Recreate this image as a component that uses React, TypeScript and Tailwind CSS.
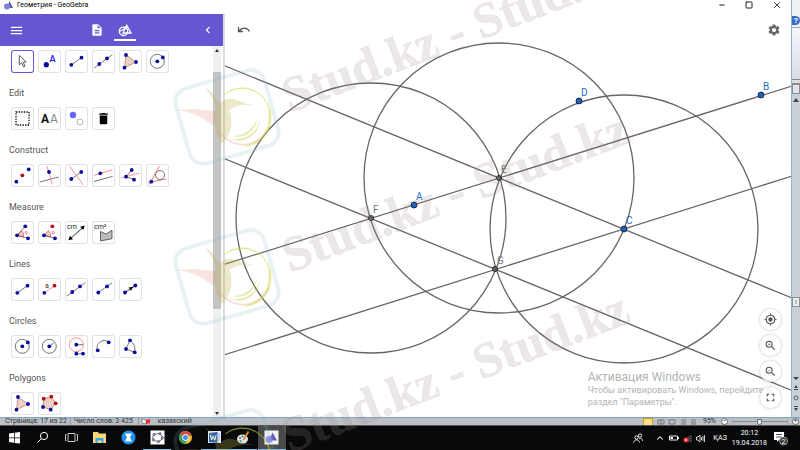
import React from 'react';
import { ChevronUp, Minus, Square, X } from 'lucide-react';
import { MdGpsFixed, MdMenu, MdDescription, MdChevronLeft, MdSettings, MdZoomIn, MdZoomOut, MdFullscreen, MdDelete } from 'react-icons/md';

const NAVY = '#0a0a9c';
const RED = '#b01020';
const PINK = '#f47878';
const GRAY = '#555';

type DotProps = { x: number; y: number; c?: string };
const Dot = ({ x, y, c = NAVY }: DotProps) => <circle cx={x} cy={y} r={1.9} fill={c} />;

type SegProps = { d: string; c?: string };
const Seg = ({ d, c = GRAY }: SegProps) => <path d={d} stroke={c} strokeWidth={0.8} fill="none" />;

interface Tool {
    name: string;
    icon: React.ReactNode;
    active?: boolean;
}

interface ToolGroup {
    title?: string;
    tools: Tool[];
}

const segment = <><Seg d="M6.3 14.8 16.5 7.7" /><Dot x={6.3} y={14.8} /><Dot x={16.5} y={7.7} /></>;
const line = <><Seg d="M2 18 20.3 4.7" /><Dot x={7.3} y={14} /><Dot x={15} y={8.4} /></>;
const triangle = (
    <>
        <path d="M7 5 17 12 5.5 17.7Z" fill="#ecd2c6" stroke="#c08068" strokeWidth={0.8} />
        <Dot x={7} y={5} /><Dot x={17} y={12} /><Dot x={5.5} y={17.7} />
    </>
);
const circlePoint = (
    <>
        <circle cx={11.3} cy={11.3} r={7} fill="none" stroke={GRAY} strokeWidth={0.8} />
        <Dot x={11.3} y={11.3} /><Dot x={16.8} y={7.4} />
    </>
);
const angleWedge = <path d="M6 14.3 10.5 9.5A6.5 6.5 0 0 1 12.5 16Z" fill="#f9c4c4" stroke="#e85050" strokeWidth={0.7} />;

const groups: ToolGroup[] = [
    {
        tools: [
            { name: 'Move', active: true, icon: <path d="M8.3 5.5v9.3l2.3-1.9 1.9 4 1.5-.7-1.8-3.9 3-.3Z" fill="#fff" stroke="#333" strokeWidth={0.8} /> },
            { name: 'Point', icon: <><circle cx={8.3} cy={14.7} r={2.6} fill={NAVY} /><text x={11.5} y={11.5} fontSize={9} fontWeight={600} fill="#2222ee">A</text></> },
            { name: 'Segment', icon: segment },
            { name: 'Line', icon: line },
            { name: 'Polygon', icon: triangle },
            { name: 'Circle with Center through Point', icon: circlePoint },
        ],
    },
    {
        title: 'Edit',
        tools: [
            { name: 'Select Objects', icon: <rect x={5} y={5} width={13} height={13} fill="none" stroke="#000" strokeWidth={1.3} strokeDasharray="1.3 1.3" /> },
            { name: 'Show / Hide Label', icon: <><text x={3} y={15.5} fontSize={12} fontWeight={700} fill="#111">A</text><text x={12} y={15.5} fontSize={12} fill="#888">A</text></> },
            { name: 'Show / Hide Object', icon: <><circle cx={8} cy={8} r={3.2} fill="#6666ff" /><circle cx={15} cy={15} r={3} fill="none" stroke="#999" strokeWidth={0.7} /></> },
            { name: 'Delete', icon: <MdDelete x={4} y={4} size={15} color="#000" /> },
        ],
    },
    {
        title: 'Construct',
        tools: [
            { name: 'Midpoint or Center', icon: <><Dot x={5.3} y={17.7} /><Dot x={11.3} y={11.3} c={RED} /><Dot x={17.7} y={5.3} /></> },
            { name: 'Perpendicular Line', icon: <><Seg d="M1.7 18 20.7 13" /><Seg d="M9 2.3 14.3 20.5" c={PINK} /><Dot x={11} y={8} /></> },
            { name: 'Perpendicular Bisector', icon: <><Seg d="M6.3 15 16.3 8" /><Seg d="M4.7 2.3 18 20.7" c={PINK} /><Dot x={6.3} y={15} /><Dot x={16.3} y={8} /></> },
            { name: 'Parallel Line', icon: <><Seg d="M2 11.3 20.7 5.7" c={PINK} /><Seg d="M2 17.5 20.7 12.3" /><Dot x={8.3} y={9.3} /></> },
            { name: 'Angle Bisector', icon: <><Seg d="M1.7 14 20.3 9" c={PINK} /><Seg d="M12.7 6 7 12.7 15 15.7" /><Dot x={12.7} y={6} /><Dot x={7} y={12.7} /><Dot x={15} y={15.7} /></> },
            { name: 'Tangents', icon: <><circle cx={14} cy={11} r={4.5} fill="none" stroke={GRAY} strokeWidth={0.8} /><Seg d="M3.3 20.5 13.3 2.3M2.3 18.3 20.3 15" c="#e85050" /><Dot x={5.3} y={17.7} /></> },
        ],
    },
    {
        title: 'Measure',
        tools: [
            { name: 'Angle', icon: <>{angleWedge}<Seg d="M14.3 5.3 6 14.3 17 17.3" /><circle cx={15.3} cy={11.7} r={1.2} fill="none" stroke="#e85050" strokeWidth={0.7} /><Dot x={14.3} y={5.3} /><Dot x={6} y={14.3} /><Dot x={17} y={17.3} /></> },
            { name: 'Angle with Given Size', icon: <>{angleWedge}<Seg d="M6 14.3 17 17.3" /><circle cx={15.3} cy={11.7} r={1.2} fill="none" stroke="#e85050" strokeWidth={0.7} /><Dot x={14.3} y={5.3} c={RED} /><Dot x={6} y={14.3} /><Dot x={17} y={17.3} /></> },
            { name: 'Distance or Length', icon: <><text x={2} y={8} fontSize={7} fill="#222">cm</text><Seg d="M5 18 18.5 6" c="#000" /><path d="M3.3 19.3 5 14.8 8 18.2ZM19.8 4.6 18.2 9 15.2 5.8Z" fill="#000" /></> },
            { name: 'Area', icon: <><text x={2} y={8} fontSize={7} fill="#222">cm²</text><path d="M8.5 10.5 14 13 20 9.3V17.7L8.5 20Z" fill="#bbb" stroke="#444" strokeWidth={0.8} /></> },
        ],
    },
    {
        title: 'Lines',
        tools: [
            { name: 'Segment', icon: segment },
            { name: 'Segment with Given Length', icon: <><text x={7} y={9.5} fontSize={7} fill="#333">a</text><Seg d="M6.3 14.8 16.5 7.7" c={PINK} /><Dot x={6.3} y={14.8} /><Dot x={16.5} y={7.7} c={RED} /></> },
            { name: 'Line', icon: line },
            { name: 'Ray', icon: <><Seg d="M6.3 14.5 20.3 4.7" /><Dot x={6.3} y={14.5} /><Dot x={15} y={8.4} /></> },
            { name: 'Vector', icon: <><Seg d="M6 14.5 16.3 7.5" c="#000" /><path d="M14.3 8.8 12 12.8 9.6 9.6Z" fill="#000" /><Dot x={6} y={14.5} /><Dot x={16.3} y={7.5} /></> },
        ],
    },
    {
        title: 'Circles',
        tools: [
            { name: 'Circle with Center through Point', icon: circlePoint },
            { name: 'Circle: Center & Radius', icon: <><circle cx={11.3} cy={11.3} r={7} fill="none" stroke={GRAY} strokeWidth={0.8} /><Seg d="M11.3 11.3 16 8" /><Dot x={11.3} y={11.3} /></> },
            { name: 'Compass', icon: <><circle cx={11.3} cy={9.7} r={7} fill="none" stroke={PINK} strokeWidth={0.8} /><Seg d="M11.3 9.7H18.3M11.3 18.7H18" /><Dot x={11.3} y={9.7} /><Dot x={11.3} y={18.7} /><Dot x={18} y={18.7} /></> },
            { name: 'Semicircle', icon: <><Seg d="M5.7 15.3A7 7 0 0 1 16.7 7.3" /><Dot x={5.7} y={15.3} /><Dot x={16.7} y={7.3} /></> },
            { name: 'Circular Sector', icon: <><Seg d="M11 5.3 7 14 15.7 17.3A12 12 0 0 0 11 5.3" /><Dot x={11} y={5.3} /><Dot x={7} y={14} /><Dot x={15.7} y={17.3} /></> },
        ],
    },
    {
        title: 'Polygons',
        tools: [
            { name: 'Polygon', icon: triangle },
            { name: 'Regular Polygon', icon: <><path d="M5.7 6.7 13.3 4.7 17.7 11.3 12.7 17.7 5 15Z" fill="#ecd2c6" stroke="#c08068" strokeWidth={0.8} /><Dot x={5.7} y={6.7} c={RED} /><Dot x={13.3} y={4.7} c={RED} /><Dot x={17.7} y={11.3} c={RED} /><Dot x={12.7} y={17.7} /><Dot x={5} y={15} /></> },
        ],
    },
];

const ShapesIcon = ({ size }: { size: number }) => (
    <svg width={size} height={size} viewBox="0 0 14 14" fill="none" stroke="currentColor" strokeWidth={1.3}>
        <circle cx={5.5} cy={8.3} r={4.2} />
        <path d="M8.7 2.2 13 10H5Z" />
        <path d="M1.5 8.5 9 4.5" />
    </svg>
);

const TitleBar = () => (
    <div className="flex h-[14px] shrink-0 items-start bg-white pl-1 text-[7px] leading-[10px] text-black">
        <svg className="mr-1 mt-px h-[9px] w-[9px]" viewBox="0 0 9 9">
            <path d="M5.5 0 9 7H3Z" fill="#5a5a9c" />
            <circle cx={3} cy={5.5} r={3} fill="#8080e0" />
        </svg>
        <span>Геометрия - GeoGebra</span>
        <div className="ml-auto mr-[9px] flex gap-[19px] text-[#222]">
            <button aria-label="Minimize"><Minus className="h-[8px] w-[8px]" strokeWidth={3} /></button>
            <button aria-label="Maximize"><Square className="h-[8px] w-[8px]" strokeWidth={3} /></button>
            <button aria-label="Close"><X className="h-[10px] w-[10px]" strokeWidth={2} /></button>
        </div>
    </div>
);

const ToolPanel = () => (
    <aside className="flex w-[223px] shrink-0 flex-col">
        <header className="flex h-8 shrink-0 items-center bg-[#6557d2] pl-[9px] pr-2 text-white">
            <button aria-label="Menu"><MdMenu size={15} /></button>
            <button aria-label="Algebra" className="ml-[66px]"><MdDescription size={14} /></button>
            <button aria-label="Tools" className="ml-[10px] flex h-8 w-[22px] flex-col items-center justify-between pb-[5px] pt-[9px]">
                <ShapesIcon size={14} />
                <span className="h-[2px] w-full bg-white" />
            </button>
            <button aria-label="Collapse" className="ml-auto"><MdChevronLeft size={14} /></button>
        </header>
        <div className="flex min-h-0 flex-1">
            <div className="flex flex-1 flex-col gap-[13px] overflow-hidden pl-[11px] pt-1">
                {groups.map((group, index) => (
                    <section key={index} className="shrink-0">
                        {group.title && <h2 className="-ml-[2px] mb-[7px] text-[9px] leading-[14px] text-[#555]">{group.title}</h2>}
                        <div className="flex gap-1">
                            {group.tools.map((tool, i) => (
                                <button
                                    key={i}
                                    aria-label={tool.name}
                                    className={`h-[23px] w-[23px] rounded-[3px] bg-white ring-1 ring-inset ${tool.active ? 'ring-[#6557d2]' : 'ring-[#e2e2e2]'}`}
                                >
                                    <svg className="h-[23px] w-[23px]" viewBox="0 0 23 23">{tool.icon}</svg>
                                </button>
                            ))}
                        </div>
                    </section>
                ))}
            </div>
            <div className="flex w-[8px] flex-col items-center bg-[#f0f0f0]">
                <svg className="my-[3px] h-[4px] w-[4px]" viewBox="0 0 4 4"><path d="M2 0 4 3H0Z" fill="#333" /></svg>
                <div className="mt-4 h-[64%] w-full bg-[#c4c4c4]" />
                <svg className="mb-[2px] mt-auto h-[4px] w-[4px]" viewBox="0 0 4 4"><path d="M2 4 4 1H0Z" fill="#333" /></svg>
            </div>
            <div className="w-[2px] bg-white" />
        </div>
    </aside>
);

const circles = [
    { x: 371, y: 218, r: 135 },
    { x: 499, y: 178, r: 135 },
    { x: 624, y: 229, r: 134 },
];

const lines = [
    'M224 65.5 792 298',
    'M224 158.5 792 390.5',
    'M224 264.5 792 86',
    'M224 355 792 176',
];

const points = [
    { label: 'A', x: 414, y: 205, free: true },
    { label: 'B', x: 761, y: 95, free: true },
    { label: 'C', x: 624, y: 229, free: true },
    { label: 'D', x: 579, y: 101, free: true },
    { label: 'E', x: 499, y: 178 },
    { label: 'F', x: 371, y: 218 },
    { label: 'G', x: 495, y: 269 },
];

const zoomButtons = [
    { name: 'Standard view', Icon: MdGpsFixed },
    { name: 'Zoom in', Icon: MdZoomIn },
    { name: 'Zoom out', Icon: MdZoomOut },
    { name: 'Fullscreen', Icon: MdFullscreen },
];

const GraphicsView = () => (
    <main className="relative flex-1 overflow-hidden border-l-2 border-[#dcdcdc] bg-white">
        <svg className="absolute inset-0 h-full w-full">
            <g transform="translate(-225 -14)">
                <g fill="none" stroke="#666" strokeWidth={1.3}>
                    {circles.map((c) => <circle key={c.x} cx={c.x} cy={c.y} r={c.r} />)}
                    {lines.map((d) => <path key={d} d={d} />)}
                </g>
                {points.map((p) => (
                    <g key={p.label}>
                        <circle cx={p.x} cy={p.y} r={p.free ? 3 : 2.5} fill={p.free ? '#1565c0' : '#606060'} stroke="#111" strokeWidth={0.8} />
                        <text x={p.x + 2} y={p.y - 5} fontSize={10} fill={p.free ? '#1e6fd0' : '#777'}>{p.label}</text>
                    </g>
                ))}
            </g>
        </svg>
        <button aria-label="Undo" className="absolute left-3 top-2 text-[#555]">
            <svg className="h-4 w-4" viewBox="0 0 16 16" fill="none" stroke="currentColor" strokeWidth={1.3}>
                <path d="M1.5 5V9.500H6M2 9C5 5 10 5 12.500 9.500" />
            </svg>
        </button>
        <button aria-label="Settings" className="absolute right-[10px] top-[9px] text-[#666]"><MdSettings size={14} /></button>
        <div className="absolute bottom-[9px] right-[20px] text-[9px] leading-[12px] text-[#b4b4b4]">
            <p className="text-[12px] leading-[14px]">Активация Windows</p>
            <p>Чтобы активировать Windows, перейдите в</p>
            <p>раздел "Параметры".</p>
        </div>
        <div className="absolute bottom-[9px] right-[10px] flex flex-col gap-[5px]">
            {zoomButtons.map(({ name, Icon }) => (
                <button key={name} aria-label={name} className="flex h-[21px] w-[21px] items-center justify-center rounded-full bg-white/80 text-[#555] shadow-[0_0_3px_rgba(0,0,0,0.3)]">
                    <Icon size={13} />
                </button>
            ))}
        </div>
    </main>
);

// The strip of the Word window that shows to the right of GeoGebra
const WordEdge = () => (
    <div className="flex w-[9px] shrink-0 flex-col items-center overflow-hidden border-l border-[#8fb4d0] bg-[#c9d0d8]">
        <div className="flex h-7 w-full items-end border-b border-[#9aa9c4] bg-[#eef1f6] pb-[2px]">
            <span className="flex h-[9px] w-[8px] items-center justify-center rounded-r-full bg-[#3a6cc8] text-[8px] font-bold leading-none text-white">?</span>
        </div>
        <div className="h-[51px] w-full bg-gradient-to-b from-[#f4f6fb] to-[#d8dce4]" />
        <div className="h-[5px] w-full border-y border-[#888] bg-[#ddd]" />
        <div className="h-[10px] w-[8px] border border-[#8a8f98] bg-[#e4e4e8]" />
        <svg className="mt-1 h-[4px] w-[6px]" viewBox="0 0 6 4"><path d="M3 0 6 4H0Z" fill="#444" /></svg>
        <div className="flex-1" />
        <div className="h-[10px] w-full border border-[#8a8f98] bg-[#eee] p-[2px]"><div className="h-full bg-[#bbb]" /></div>
        <svg className="mt-[68px] h-[42px] w-[8px] shrink-0" viewBox="0 0 8 42" fill="#444">
            <path d="M1 2H7L4 5ZM4 10 6 13H2ZM2 14H6V15H2ZM2 33H6L4 36ZM2 31H6V32H2Z" />
            <circle cx={4} cy={23} r={2} fill="none" stroke="#444" strokeWidth={0.8} />
        </svg>
    </div>
);

const WordStatus = () => (
    <footer className="flex h-[9px] shrink-0 items-center overflow-hidden border-b border-t border-b-[#555] border-t-[#7ba7c4] bg-[#bcc0c6] pl-[5px] text-[7px] leading-[7px] text-[#333]">
        <span>Страница: 17 из 22</span>
        <span className="ml-[3px] border-l border-[#999] pl-[3px]">Число слов: 3 425</span>
        <span className="ml-[5px] border-l border-[#999] pl-[2px]">
            <svg className="h-[7px] w-[10px]" viewBox="0 0 10 7"><path d="M1 1 5 2V6L1 5Z" fill="#fff" stroke="#456" strokeWidth={0.6} /><path d="M5 2 9 1V5L5 6Z" fill="#d33" /></svg>
        </span>
        <span className="ml-[7px]">казахский</span>
        <div className="ml-auto mr-[1px] flex h-full items-center">
            <span className="h-[8px] w-[10px] border border-[#c89820] bg-[#ffe08a]" />
            <svg className="ml-1 h-[6px] w-[40px]" viewBox="0 0 40 6" fill="none" stroke="#666" strokeWidth={0.8}>
                <path d="M1 1H7V5H1ZM4 1V5M12 1H18V5H12ZM24 1H29M25 3H29M24 5H29M34 1H39M34 3H39M34 5H39" />
            </svg>
            <span className="ml-[6px]">95%</span>
            <span className="ml-[5px] flex h-[7px] w-[7px] items-center justify-center rounded-full border border-[#666] bg-white">−</span>
            <input type="range" aria-label="Zoom" defaultValue={48} className="mx-1 h-[6px] w-[56px] appearance-none border-x border-[#aaa] bg-[linear-gradient(#888,#888)] bg-[length:100%_1px] bg-center bg-no-repeat [&::-webkit-slider-thumb]:h-[6px] [&::-webkit-slider-thumb]:w-[5px] [&::-webkit-slider-thumb]:appearance-none [&::-webkit-slider-thumb]:rounded-b-full [&::-webkit-slider-thumb]:border [&::-webkit-slider-thumb]:border-[#666] [&::-webkit-slider-thumb]:bg-[#eee]" />
            <span className="flex h-[7px] w-[7px] items-center justify-center rounded-full border border-[#666] bg-white">+</span>
        </div>
    </footer>
);

const apps = [
    { name: 'Start', icon: <path d="M2 3.500 7 2.800V7.500H2ZM7.700 2.700 13 2V7.500H7.700ZM2 8.200H7V12.800L2 12.100ZM7.700 8.200H13V13.600L7.700 12.900Z" fill="#fff" /> },
    { name: 'Search', icon: <><circle cx={9} cy={6} r={3.6} fill="none" stroke="#fff" /><path d="M6.300 8.700 2.500 12.500" stroke="#fff" /></> },
    { name: 'Task View', icon: <path d="M4 3.500H11V11.500H4ZM2.500 4.500H1.500V10.500H2.500M12.500 4.500H13.500V10.500H12.500" fill="none" stroke="#ddd" strokeWidth={0.9} /> },
    { name: 'Explorer', icon: <><path d="M1 2H6L7 3.500H14V13H1Z" fill="#f8d878" /><path d="M3.500 13V8H11.500V13H9.500V10.500H5.500V13Z" fill="#3aa8e0" /></> },
    { name: 'Browser', icon: <><circle cx={7.5} cy={7.5} r={7} fill="#2090f0" /><path d="M4 3.500H11L9 7.500 11 11.500H4L6 7.500Z" fill="#fff" /></> },
    { name: 'GeoGebra', open: true, icon: <><rect x={0.5} y={0.5} width={14} height={14} fill="#fff" /><ellipse cx={7.5} cy={7.5} rx={4.8} ry={3.8} fill="none" stroke="#666" strokeWidth={1} /><g fill="#9c9cf0" stroke="#333" strokeWidth={0.5}><circle cx={4} cy={4.5} r={1.2} /><circle cx={10} cy={3.6} r={1.2} /><circle cx={12.3} cy={8} r={1.2} /><circle cx={8.5} cy={11.6} r={1.2} /><circle cx={3.3} cy={9.8} r={1.2} /></g></> },
    { name: 'Chrome', icon: <><circle cx={7.5} cy={7.5} r={6.5} fill="#e8c030" /><path d="M7.500 7.500 1.900 4.200A6.500 6.500 0 0 1 13.600 5.200Z" fill="#dc4a3c" /><path d="M7.500 7.500 1.900 4.200A6.500 6.500 0 0 0 7 14L9 10Z" fill="#38a058" /><circle cx={7.5} cy={7.5} r={3} fill="#4a8af0" stroke="#fff" /></> },
    { name: 'Word', open: true, icon: <><rect x={1} y={1} width={13} height={12} fill="#e8eef8" /><path d="M11 4H13M11 6H13M11 8H13M11 10H13" stroke="#7a9ad0" strokeWidth={0.7} /><path d="M2 3 10.500 2V13L2 12Z" fill="#2b5fb0" /><path d="M3.300 5 4.600 10 6.200 6 7.800 10 9.200 5" fill="none" stroke="#fff" /></> },
    { name: 'Paint', open: true, icon: <><ellipse cx={6.5} cy={9} rx={5.5} ry={4.5} fill="#d8e8f4" /><circle cx={4} cy={8} r={1.1} fill="#d44" /><circle cx={6.5} cy={6.5} r={1.1} fill="#3a3" /><circle cx={4.5} cy={11} r={1.1} fill="#38c" /><path d="M7.500 10 12.500 1.500" stroke="#e09030" strokeWidth={1.8} /></> },
    { name: 'Geometry', open: true, active: true, icon: <><rect x={0.5} y={0.5} width={14} height={14} fill="#f4f4f4" /><path d="M8.500 2.500 13 10.500H5Z" fill="#6060b8" /><circle cx={5} cy={9.5} r={3.5} fill="#8484e0" fillOpacity={0.85} /></> },
];

const Taskbar = () => (
    <nav className="flex h-6 shrink-0 items-center bg-[#08090b] text-[7px] text-white">
        <div className="flex w-[286px] justify-between">
            {apps.map((app) => (
                <button
                    key={app.name}
                    aria-label={app.name}
                    className={`flex h-6 w-7 items-center justify-center border-b ${app.open ? 'border-[#7ab8e8]' : 'border-transparent'} ${app.active ? 'bg-[#484a4c]' : ''}`}
                >
                    <svg className="h-[15px] w-[15px]" viewBox="0 0 15 15">{app.icon}</svg>
                </button>
            ))}
        </div>
        <div className="ml-auto flex items-center pr-3">
            <svg className="mr-3 h-[10px] w-[10px]" viewBox="0 0 10 10" fill="none" stroke="#fff" strokeWidth={0.9}>
                <circle cx={3.5} cy={4.5} r={1.7} /><circle cx={7} cy={2.5} r={1.7} />
                <path d="M.5 9.500C1 6 6 6 6.500 9.500M6 6C8 4.500 9.500 6 9.500 8" />
            </svg>
            <ChevronUp className="mr-1 h-[10px] w-[10px]" strokeWidth={2.5} />
            <svg className="mr-1 h-[8px] w-[10px]" viewBox="0 0 10 8"><path d="M.5 2H8.500V6H.5Z" fill="none" stroke="#fff" strokeWidth={0.9} /><path d="M1.500 3H4V5H1.500ZM8.500 3H10V5H8.500Z" fill="#fff" /></svg>
            <svg className="mr-1 h-[10px] w-[9px]" viewBox="0 0 9 10"><path d="M3 9A6 6 0 0 1 9 3M5 9A4 4 0 0 1 9 5M7 9A2 2 0 0 1 9 7" fill="none" stroke="#888" strokeWidth={0.8} /><circle cx={3} cy={7} r={2.8} fill="#e02020" /><path d="M2 6 4 8M4 6 2 8" stroke="#fff" strokeWidth={0.8} /></svg>
            <svg className="mr-[7px] h-[9px] w-[10px]" viewBox="0 0 10 9" fill="none" stroke="#fff" strokeWidth={0.8}><path d="M.5 3H2L4 1V8L2 6H.5ZM5.500 3V6M7 2V7M8.500 1V8" /></svg>
            <span className="mr-[5px]">ҚАЗ</span>
            <div className="mr-[7px] text-center leading-[10px]">
                <p>20:12</p>
                <p>19.04.2018</p>
            </div>
            <svg className="h-[15px] w-[14px]" viewBox="0 0 14 15">
                <path d="M0 1H10V9H5L3 11V9H0Z" fill="#fff" /><path d="M2 3.500H8M2 6H8" stroke="#222" strokeWidth={0.8} />
                <circle cx={9.5} cy={10} r={4} fill="#333" stroke="#bbb" strokeWidth={0.8} />
                <text x={7.5} y={12.5} fontSize={7} fill="#fff">2</text>
            </svg>
        </div>
    </nav>
);

const WatermarkLogo = () => (
    <g fill="none">
        <rect x={-46} y={-39} width={92} height={78} rx={14} transform="rotate(-16)" stroke="#78b4bc" strokeOpacity={0.17} strokeWidth={4} />
        <path d="M-9 12A28 28 0 0 0 42 10" stroke="#f0a0a8" strokeOpacity={0.4} strokeWidth={1.5} />
        <path d="M-2-23A29 29 0 0 1 44 3C43 18 32 29 17 29C31 26 41 17 42 2A27 27 0 0 0-2-23Z" fill="#d0d840" fillOpacity={0.4} stroke="#d0d840" strokeOpacity={0.35} />
        <path d="M33-1C33 14 20 24 3 22C18 28 34 17 33-1ZM30 1C27 12 17 19 6 19C18 22 29 14 30 1Z" fill="#c8c840" fillOpacity={0.4} />
        <path d="M-22-30C-15-25-10-20-8-13C-2-20 6-19 12-16C17-14 22-13 27-12C17-13 8-12 2-7C7 4 4 18-5 27C-11 20-13 8-11-10C-13-18-18-24-22-30Z" fill="#b8b040" fillOpacity={0.28} />
        <path d="M-50-7C-36-9-20-7-11-6L-10 9C-19 8-24-4-50-7Z" fill="#e09078" fillOpacity={0.24} />
    </g>
);

const Watermark = () => (
    <svg className="pointer-events-none absolute inset-0 h-full w-full" aria-hidden="true">
        {[0, 160, 340].map((y) => (
            <g key={y} transform={`translate(0 ${y})`}>
                <g transform="translate(227 117)"><WatermarkLogo /></g>
                <text
                    transform="translate(290 113) rotate(-21)"
                    fontFamily="Liberation Serif"
                    fontWeight={700}
                    fontSize={50}
                    fill="#988c8c"
                    fillOpacity={0.2}
                    stroke="#e08080"
                    strokeOpacity={0.15}
                    strokeWidth={0.5}
                >
                    Stud.kz - Stud.kz
                </text>
            </g>
        ))}
    </svg>
);

export default function App() {
    return (
        <div className="relative flex h-screen flex-col overflow-hidden bg-white font-[Roboto,sans-serif]">
            <div className="flex min-h-0 flex-1">
                <div className="flex min-w-0 flex-1 flex-col">
                    <TitleBar />
                    <div className="flex min-h-0 flex-1">
                        <ToolPanel />
                        <GraphicsView />
                    </div>
                </div>
                <WordEdge />
            </div>
            <WordStatus />
            <Taskbar />
            <Watermark />
        </div>
    );
}
